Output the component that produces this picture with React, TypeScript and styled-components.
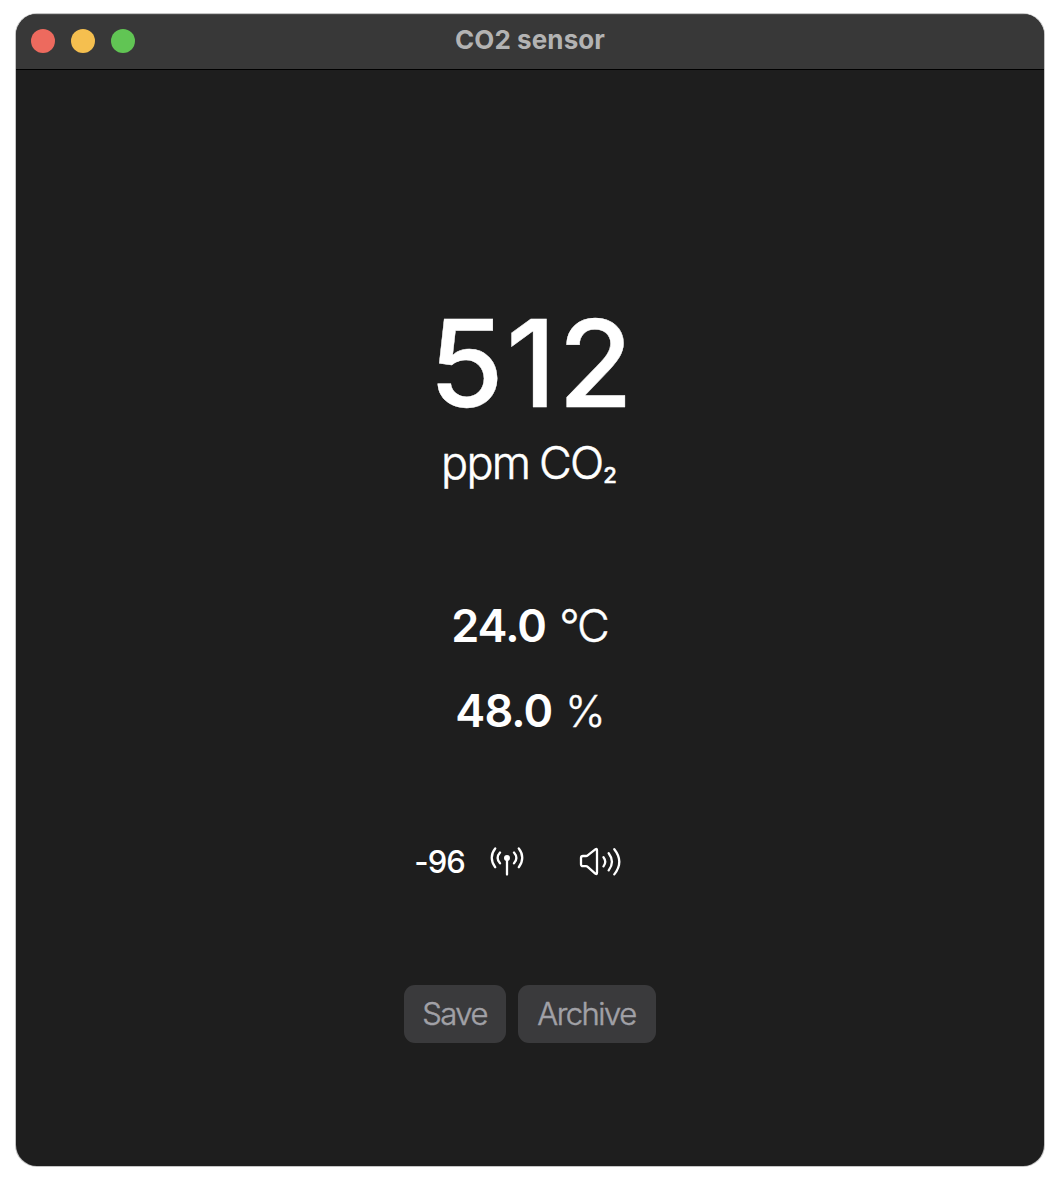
import React from "react";
import styled, { createGlobalStyle } from "styled-components";

const Global = createGlobalStyle`
  * { box-sizing: border-box; }
  body {
    margin: 0;
    background: #fff;
    font-family: Inter, "Liberation Sans", sans-serif;
    -webkit-font-smoothing: antialiased;
  }
`;

const Desktop = styled.div`
  width: 1060px;
  height: 1180px;
  padding: 14px 16px;
`;

const Window = styled.main`
  display: flex;
  flex-direction: column;
  height: 1152px;
  border-radius: 21px;
  overflow: hidden;
  background: #1e1e1e;
  box-shadow: 0 0 0 1px #c4c4c4;
`;

const TitleBar = styled.header`
  display: grid;
  grid-template-columns: 1fr auto 1fr;
  align-items: center;
  height: 56px;
  padding: 0 15px 2px;
  background: #383838;
  border-bottom: 1px solid #000;
  box-shadow: inset 0 1px 0 #4b4b4b;
`;

const Lights = styled.div`
  display: flex;
  gap: 16px;
  padding-top: 1px;
`;

const Light = styled.span<{ $color: string }>`
  width: 24px;
  height: 24px;
  border-radius: 50%;
  background: ${(p) => p.$color};
`;

const Title = styled.h1`
  margin: 0;
  padding-bottom: 2px;
  font-size: 26px;
  line-height: 32px;
  font-weight: 700;
  letter-spacing: 0.1px;
  color: #b3b3b3;
`;

const Content = styled.section`
  display: flex;
  flex-direction: column;
  align-items: center;
  padding-top: 234px;
  color: #fff;
`;

const Reading = styled.div`
  padding-left: 4px;
  font-size: 121px;
  line-height: 119px;
  height: 120px;
  font-weight: 500;
  letter-spacing: 2.2px;
  -webkit-text-stroke: 0.4px currentColor;
`;

const Unit = styled.div`
  display: flex;
  align-items: baseline;
  height: 60px;
  margin: 9px 2px 0 0;
  font-size: 45px;
  line-height: 60px;
  font-weight: 300;
  letter-spacing: -1.8px;
  word-spacing: -1px;
  -webkit-text-stroke: 0.5px currentColor;
`;

const Subscript = styled.sub`
  margin-left: 1px;
  font-size: 22px;
  line-height: 52px;
  font-weight: 500;
  letter-spacing: 0;
  vertical-align: baseline;
  transform: translateY(4px);
`;

const Climate = styled.div`
  display: flex;
  flex-direction: column;
  align-items: center;
  gap: 25px;
  margin-top: 103px;
`;

const Measure = styled.div`
  display: flex;
  gap: 13px;
  margin-right: 1px;
  font-size: 45px;
  line-height: 60px;
`;

const Value = styled.span`
  font-weight: 600;
  letter-spacing: -0.9px;
`;

const MeasureUnit = styled.span<{ $size?: number }>`
  font-size: ${(p) => p.$size ?? 45}px;
  font-weight: 300;
  letter-spacing: -2px;
  -webkit-text-stroke: 0.4px currentColor;
`;

const Status = styled.div`
  display: flex;
  align-items: center;
  height: 40px;
  margin: 101px 24px 0 0;
`;

const Signal = styled.span`
  margin-right: 25px;
  font-size: 31px;
  line-height: 40px;
  font-weight: 500;
  letter-spacing: -1px;
`;

const Glyph = styled.svg<{ $gap?: number }>`
  display: block;
  margin-right: ${(p) => p.$gap ?? 0}px;
  fill: none;
  stroke: #fff;
  stroke-width: 2.3;
  stroke-linecap: round;
  stroke-linejoin: round;
`;

const Actions = styled.div`
  display: flex;
  gap: 12px;
  margin-top: 103px;
`;

const Button = styled.button<{ $width: number }>`
  width: ${(p) => p.$width}px;
  height: 58px;
  padding: 0 1px 0 0;
  border: 0;
  border-radius: 11px;
  background: #3a3a3c;
  color: #a1a1a7;
  font: 300 31px/58px Inter, "Liberation Sans", sans-serif;
  letter-spacing: -1.5px;
  -webkit-text-stroke: 0.5px currentColor;
`;

export default function App() {
  return (
    <>
      <Global />
      <Desktop>
        <Window>
          <TitleBar>
            <Lights>
              <Light $color="#ed6a5e" />
              <Light $color="#f5bf4f" />
              <Light $color="#61c554" />
            </Lights>
            <Title>CO2 sensor</Title>
          </TitleBar>
          <Content>
            <Reading>512</Reading>
            <Unit>
              <span>ppm CO</span>
              <Subscript>2</Subscript>
            </Unit>
            <Climate>
              <Measure>
                <Value>24.0</Value>
                <MeasureUnit>°C</MeasureUnit>
              </Measure>
              <Measure>
                <Value>48.0</Value>
                <MeasureUnit $size={43}>%</MeasureUnit>
              </Measure>
            </Climate>
            <Status>
              <Signal>-96</Signal>
              <Glyph width="34" height="40" viewBox="0 0 34 40" $gap={55}>
                <path d="M5.200 6.500C.6 12.200.6 19.500 5.200 25.200M28.800 6.500c4.600 5.700 4.600 13 0 18.700M10 10.500c-2.900 3.300-2.900 7.500 0 10.800M24 10.500c2.900 3.300 2.900 7.500 0 10.800M17 16v16.500" />
                <circle cx="17" cy="16" r="3" fill="#fff" stroke="none" />
              </Glyph>
              <Glyph width="43" height="40" viewBox="0 0 43 40">
                <path d="M4 14h3q1 0 1.700-.6l7.600-6q1.700-1.200 1.700.8v22.600q0 2-1.700.8l-7.600-6.800q-.7-.6-1.700-.6H4q-2 0-2-2v-6.200q0-2 2-2M24.500 15.200q3.500 4.600 0 9.200M29.700 11.200q6.500 8.600 0 17.200M35.300 7.200q10 12.600 0 25.200" />
              </Glyph>
            </Status>
            <Actions>
              <Button $width={102}>Save</Button>
              <Button $width={138}>Archive</Button>
            </Actions>
          </Content>
        </Window>
      </Desktop>
    </>
  );
}
